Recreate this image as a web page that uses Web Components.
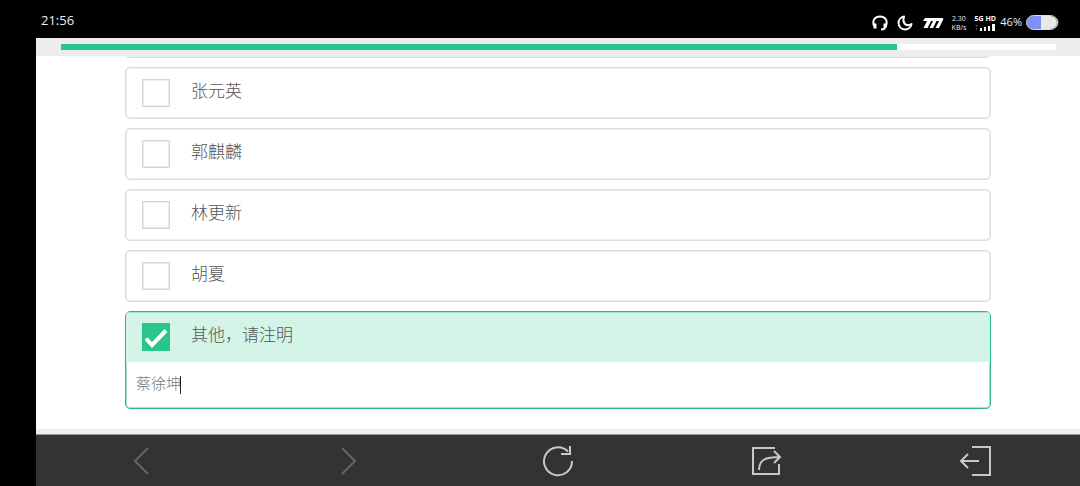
<!DOCTYPE html>
<html lang="zh-CN">
<head>
<meta charset="utf-8">
<meta name="viewport" content="width=device-width, initial-scale=1">
<title>问卷</title>
<style>
html, body { margin: 0; height: 100%; background: #000; }
body { font-family: "Open Sans", "Noto Sans CJK SC", sans-serif; }
</style>
</head>
<body>
<survey-screen>
  <status-bar slot="status"></status-bar>
  <progress-strip slot="progress" value="84"></progress-strip>
  <survey-option></survey-option>
  <survey-option>张元英</survey-option>
  <survey-option>郭麒麟</survey-option>
  <survey-option>林更新</survey-option>
  <survey-option>胡夏</survey-option>
  <survey-option checked note="蔡徐坤">其他，请注明</survey-option>
  <browser-bar slot="nav"></browser-bar>
</survey-screen>
<script>
const define = (name, html, setup) => {
  customElements.define(name, class extends HTMLElement {
    constructor() {
      super();
      this.attachShadow({ mode: 'open' }).innerHTML = html;
    }
    connectedCallback() { if (setup) setup(this, this.shadowRoot); }
  });
};

define('survey-screen', `
<style>
:host { display: flex; flex-direction: column; height: 100vh; }
.page { flex: 1; min-height: 0; margin-left: 36px; display: flex; flex-direction: column; background: #ededed; }
main { flex: 1; min-height: 0; overflow: hidden; display: flex; flex-direction: column; justify-content: flex-end;
  gap: 9px; padding: 0 89px 20px; margin-bottom: 5px; background: #fff; box-sizing: border-box; }
</style>
<slot name="status"></slot>
<div class="page">
  <slot name="progress"></slot>
  <main><slot></slot></main>
  <slot name="nav"></slot>
</div>`);

define('status-bar', `
<style>
:host { display: flex; align-items: center; justify-content: space-between; height: 38px; box-sizing: border-box;
  padding: 7px 21px 0 41px; color: #eee; background: #000; }
time { font-size: 13px; line-height: 16px; margin-top: -6px; }
.right { display: flex; align-items: center; gap: 4px; }
.icons { display: flex; gap: 9px; align-items: center; margin-right: 4px; }
svg { display: block; }
.rate, .net { display: flex; flex-direction: column; align-items: center; font-size: 7px; line-height: 9px; }
.net { font-weight: 700; color: #fff; }
.rate { margin-right: 4px; }
.pct { font-size: 11px; line-height: 14px; padding-bottom: 2px; }
</style>
<time>21:56</time>
<div class="right">
  <div class="icons">
    <svg width="16" height="16" viewBox="0 0 16 16" fill="none" stroke="#fff" stroke-width="2"><path d="M2 11C0 5 3 1.500 8 1.500S16 5 14 11Q13 14.500 9 14.500"/><path d="M3 8.500v5M13 8.500v4" stroke-width="3"/></svg>
    <svg width="16" height="16" viewBox="0 0 16 16" fill="none" stroke="#fff" stroke-width="2" stroke-linejoin="round"><path d="M7 1.500A6.500 6.500 0 1 0 14.500 9Q10 11.500 7.500 8.500Q5.500 5.500 7 1.500Z"/></svg>
    <svg width="22" height="12" viewBox="0 0 22 12" fill="#fff"><path d="M3 1H20Q22 1 21 3L17 11H13.500L17 4H14.500L11 11H7.500L11 4H9L5.500 11H1.500L5 4H1Z"/></svg>
  </div>
  <div class="rate"><span>2.30</span><span>KB/s</span></div>
  <div class="net"><span>5G HD</span>
    <svg width="22" height="9" viewBox="0 0 22 9" fill="#fff"><path d="M1 2h3l-1.500 2zM2 5h1v2h-1z" fill="#555"/><path d="M6 5h2v3h-2zM10 4h2v4h-2zM14 3h2v5h-2zM18 1h3v7h-3z"/></svg>
  </div>
  <span class="pct">46%</span>
  <svg width="33" height="15" viewBox="0 0 33 15"><path d="M29 2Q32 4 32 7.500T29 13" fill="none" stroke="#aaa"/><rect x="1" y="1" width="30" height="13" rx="6.500" fill="#e8e8e8"/><path d="M15 1H7.500a6.500 6.500 0 0 0 0 13H15z" fill="#7d90fb"/><rect x=".5" y=".5" width="31" height="14" rx="7" fill="none" stroke="#ddd"/></svg>
</div>`);

define('progress-strip', `
<style>
:host { display: block; padding: 6px 24px 6px 25px; }
.track { height: 6px; background: #fff; }
.fill { height: 100%; background: #2ac48a; }
</style>
<div class="track" role="progressbar" aria-label="进度"><div class="fill"></div></div>`,
(el, root) => {
  root.querySelector('.fill').style.width = el.getAttribute('value') + '%';
  root.querySelector('.track').setAttribute('aria-valuenow', el.getAttribute('value'));
});

define('survey-option', `
<style>
:host { display: block; flex: none; box-sizing: border-box; border: 1px solid #dcdcdc; border-radius: 5px;
  overflow: hidden; background: #fff; box-shadow: inset 0 0 0 1px #ededed; }
:host([checked]) { border-color: #2ab98a; box-shadow: inset 0 0 0 1px #a9e2cb; }
label { display: flex; align-items: center; gap: 21px; height: 50px; padding-left: 16px; }
:host([checked]) label { background: #d3f4e7; box-shadow: inset 0 1px #a9e2cb; }
.box { display: grid; flex: none; }
.box > * { grid-area: 1 / 1; }
input[type=checkbox] { appearance: none; margin: 0; width: 28px; height: 28px; box-sizing: border-box;
  border: 1px solid #d6d6d6; background: #fff; box-shadow: inset 0 0 0 1px #ededed; }
:host([checked]) input[type=checkbox] { border-color: #29c58a; background: #29c58a; box-shadow: none; }
svg { display: none; pointer-events: none; }
:host([checked]) svg { display: block; }
.text { font-size: 17px; line-height: 24px; font-weight: 300; color: #555; padding-bottom: 4px; }
.note { display: none; align-items: center; height: 46px; padding: 0 9px 0 10px; }
:host([note]) .note { display: flex; }
.note input { width: 44px; padding: 0 0 4px; border: 0; outline: 0; background: none; font: 300 15px/20px "Open Sans", "Noto Sans CJK SC", sans-serif; color: #777; }
.caret { width: 1px; height: 18px; background: #222; }
</style>
<label>
  <span class="box"><input type="checkbox"><svg width="28" height="28" viewBox="0 0 28 28" fill="none" stroke="#fff" stroke-width="4"><path d="M4 15.500L10 22L24 7.500"/></svg></span>
  <span class="text"><slot></slot></span>
</label>
<div class="note"><input type="text" aria-label="请注明"><span class="caret"></span></div>`,
(el, root) => {
  root.querySelector('[type=checkbox]').checked = el.hasAttribute('checked');
  root.querySelector('[type=checkbox]').addEventListener('change', e => el.toggleAttribute('checked', e.target.checked));
  root.querySelector('[type=text]').value = el.getAttribute('note') || '';
});

define('browser-bar', `
<style>
:host { display: block; background: #333; border-top: 1px solid #999; box-sizing: border-box; }
nav { display: flex; height: 51px; }
button { flex: 1; display: flex; align-items: center; justify-content: center; padding: 0; border: 0; background: none; color: #c8c8c8; }
button:disabled { color: #666; }
svg { display: block; fill: none; stroke: currentColor; stroke-width: 2; }
</style>
<nav>
  <button aria-label="后退" disabled><svg width="32" height="32"><path d="M24 3L11 16L24 29"/></svg></button>
  <button aria-label="前进" disabled><svg width="32" height="32"><path d="M9 3L22 16L9 29"/></svg></button>
  <button aria-label="刷新"><svg width="32" height="32"><path d="M30 16A14 14 0 1 1 26 6.500M28 1V9H19"/></svg></button>
  <button aria-label="分享"><svg width="32" height="32"><path d="M24 3H2V29H28V19M8 25C8 15 14 12 29 12M23 6L29 12L23 18"/></svg></button>
  <button aria-label="退出"><svg width="32" height="32"><path d="M12 2H30V30H12M19 16H1M8 9L1 16L8 23"/></svg></button>
</nav>`);
</script>
</body>
</html>
